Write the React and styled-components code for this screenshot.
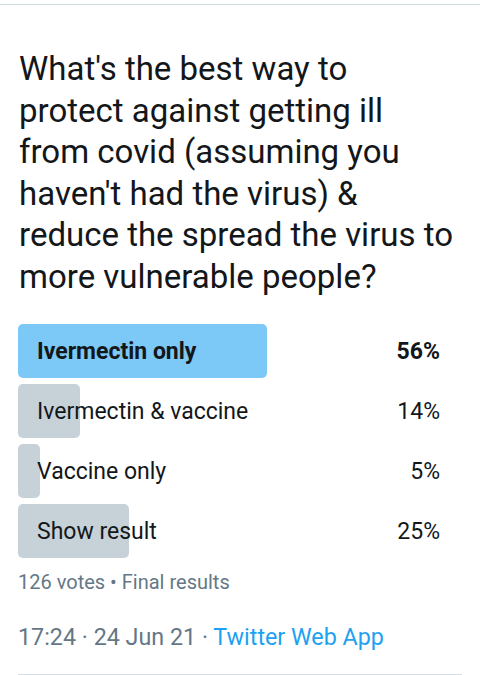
import React from "react";
import styled, { createGlobalStyle } from "styled-components";

const Global = createGlobalStyle`
  html, body { margin: 0; padding: 0; background: #ffffff; }
  body { font-family: Roboto, "Noto Sans", Arial, sans-serif; color: #14171a; }
`;

const Page = styled.div`
  width: 480px;
  height: 675px;
  overflow: hidden;
  padding-top: 4px;
  box-sizing: border-box;
`;

const TopRule = styled.div`
  height: 1px;
  background: #d3dde2;
`;

const Content = styled.div`
  padding: 0 18px;
`;

const Question = styled.h1`
  margin: 43px 0 0 1px;
  font-size: 33px;
  line-height: 41.5px;
  font-weight: 400;
  color: #14171a;
  white-space: nowrap;
`;

const Poll = styled.div`
  margin-top: 27px;
  display: flex;
  flex-direction: column;
  gap: 6px;
`;

const Row = styled.div`
  position: relative;
  height: 54px;
  display: flex;
  align-items: center;
  justify-content: space-between;
  padding: 0 22px 0 19px;
`;

const Fill = styled.div`
  position: absolute;
  left: 0;
  top: 0;
  bottom: 0;
  border-radius: 5px;
  background: ${(p) => (p.$winner ? "#7cc8f6" : "#c7d1d8")};
`;

const Label = styled.span`
  position: relative;
  font-size: 23px;
  font-weight: ${(p) => (p.$winner ? 700 : 400)};
  color: #14171a;
`;

const Pct = styled(Label)``;

const Meta = styled.div`
  margin-top: 12px;
  font-size: 20px;
  line-height: 24px;
  color: #657786;
`;

const Stamp = styled.div`
  margin-top: 29px;
  font-size: 23.3px;
  line-height: 28px;
  color: #657786;
`;

const Link = styled.span`
  color: #1da1f2;
`;

const BottomRule = styled.div`
  margin-top: 23px;
  height: 1px;
  background: #d3dde2;
`;

const options = [
  { label: "Ivermectin only", pct: 56, winner: true },
  { label: "Ivermectin & vaccine", pct: 14 },
  { label: "Vaccine only", pct: 5 },
  { label: "Show result", pct: 25 },
];

const lines = [
  "What's the best way to",
  "protect against getting ill",
  "from covid (assuming you",
  "haven't had the virus) &",
  "reduce the spread the virus to",
  "more vulnerable people?",
];

export default function App() {
  return (
    <Page>
      <Global />
      <TopRule />
      <Content>
        <Question>
          {lines.map((l, i) => (
            <React.Fragment key={i}>
              {l}
              {i < lines.length - 1 && <br />}
            </React.Fragment>
          ))}
        </Question>
        <Poll>
          {options.map((o) => (
            <Row key={o.label}>
              <Fill $winner={o.winner} style={{ width: `${o.pct}%` }} />
              <Label $winner={o.winner}>{o.label}</Label>
              <Pct $winner={o.winner}>{o.pct}%</Pct>
            </Row>
          ))}
        </Poll>
        <Meta>126 votes • Final results</Meta>
        <Stamp>
          17:24 · 24 Jun 21 · <Link>Twitter Web App</Link>
        </Stamp>
        <BottomRule />
      </Content>
    </Page>
  );
}
